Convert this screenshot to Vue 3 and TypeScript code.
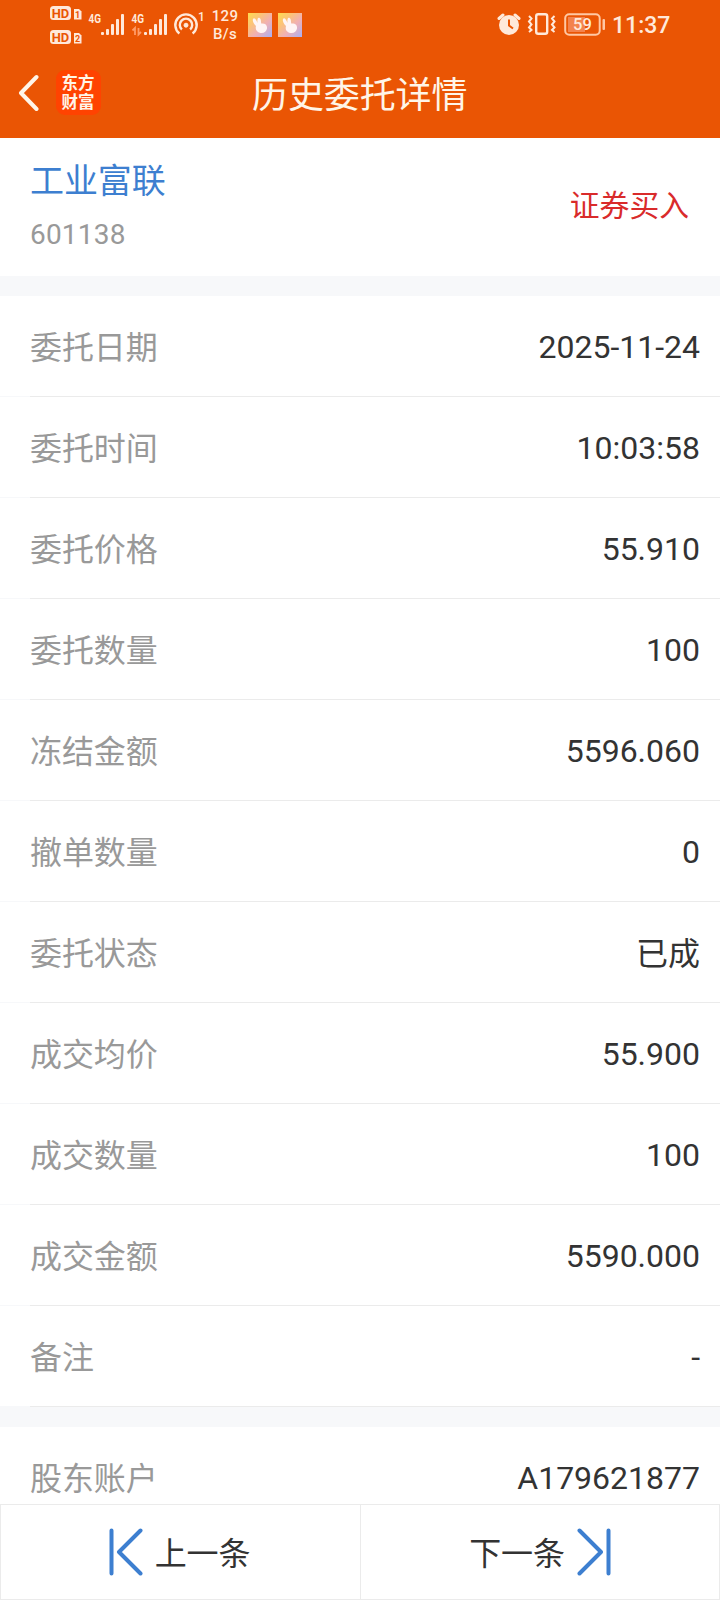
<script setup lang="ts">
interface Row {
  label: string
  value: string
}

const orderRows: Row[] = [
  { label: '委托日期', value: '2025-11-24' },
  { label: '委托时间', value: '10:03:58' },
  { label: '委托价格', value: '55.910' },
  { label: '委托数量', value: '100' },
  { label: '冻结金额', value: '5596.060' },
  { label: '撤单数量', value: '0' },
  { label: '委托状态', value: '已成' },
  { label: '成交均价', value: '55.900' },
  { label: '成交数量', value: '100' },
  { label: '成交金额', value: '5590.000' },
  { label: '备注', value: '-' },
]

const accountRows: Row[] = [{ label: '股东账户', value: 'A179621877' }]
const signalBars = [3, 6, 11, 16, 21]
</script>

<template>
  <div class="screen">
    <header class="top">
      <div class="status">
        <svg class="hd" width="36" height="50" viewBox="0 0 36 50">
          <g v-for="n in 2" :key="n" :transform="`translate(0 ${(n - 1) * 24})`">
            <rect x="0" y="6" width="21" height="14" rx="3.5" fill="#ffe9da" />
            <text x="10.5" y="17.800" text-anchor="middle" class="hd-text" textLength="17.5" lengthAdjust="spacingAndGlyphs">HD</text>
            <path d="M24 9h5l2.500 2.500V19.500h-7.500z" fill="#ffe9da" />
            <text x="27.700" y="18" text-anchor="middle" class="hd-num">{{ n }}</text>
          </g>
        </svg>
        <svg v-for="n in 2" :key="n" class="signal" width="43" height="50" viewBox="0 0 43 50">
          <text x="2.500" y="22.500" class="net" textLength="12.5" lengthAdjust="spacingAndGlyphs">4G</text>
          <rect
            v-for="(h, i) in signalBars"
            :key="h"
            :x="15 + i * 5"
            :y="35 - h"
            width="3"
            :height="h"
            rx="1"
            fill="#ffe9da"
          />
          <path v-if="n === 2" d="M6 35V28L3.500 30.500M9.500 28v6.500L12 32" fill="none" stroke="#ff9c69" stroke-width="1.800" />
        </svg>
        <svg class="hotspot" width="32" height="50" viewBox="0 0 32 50" fill="none" stroke="#ffe9da">
          <path d="M7.400 33.500A10.700 10.700 0 1 1 20.600 33.500" stroke-width="2.400" />
          <path d="M9.900 29.500A6.200 6.200 0 1 1 18.100 29.500" stroke-width="2.400" />
          <circle cx="14" cy="25.200" r="2" fill="#ffe9da" stroke-width="1" />
          <text x="26" y="20.500" class="tiny">1</text>
        </svg>
        <div class="speed"><span>129</span><span>B/s</span></div>
        <svg v-for="n in 2" :key="'app' + n" class="app" width="24" height="24" viewBox="0 0 24 24">
          <defs>
            <linearGradient :id="'glow' + n" x1="0" y1="0" x2="1" y2="1">
              <stop offset="0" stop-color="#ffdc4e" />
              <stop offset=".3" stop-color="#fcc477" />
              <stop offset=".6" stop-color="#f0b0b4" />
              <stop offset="1" stop-color="#a9b0f4" />
            </linearGradient>
          </defs>
          <rect width="24" height="24" :fill="`url(#glow${n})`" />
          <path
            d="M5 6c1-2 3-.5 4.500 4C9 6 10 4 11.500 5c1.500.8 1.500 3 1.700 5.500C17 10 19.500 12 19 15.500c-.5 3-3 5-6.500 4.500-4-.5-5.500-4-4.500-7C5.500 10.500 4.300 8 5 6z"
            fill="#fff5f5"
          />
        </svg>
        <svg class="alarm" width="24" height="50" viewBox="0 0 24 50">
          <circle cx="12" cy="25" r="10" fill="#ffe9da" />
          <path d="M2 18.500l4-3.500M22 18.500l-4-3.500" stroke="#ffe9da" stroke-width="3" stroke-linecap="round" />
          <path d="M12 19.500V25.500l4 3" fill="none" stroke="#ea5504" stroke-width="2" />
        </svg>
        <svg class="vibrate" width="30" height="50" viewBox="0 0 30 50" fill="none" stroke="#ffe9da">
          <rect x="9.200" y="14.200" width="11" height="19.500" rx="2" stroke-width="2.400" />
          <path
            d="M2 16l2.500 2.500L2 21.500l2.500 3L2 27.500l2.500 2.500L2 32M27.500 16l-2.500 2.500 2.500 3-2.500 3 2.500 3-2.500 2.500 2.500 2"
            stroke-width="2"
          />
        </svg>
        <svg class="battery" width="42" height="50" viewBox="0 0 42 50">
          <rect x="4" y="17" width="17" height="15" fill="#f3834e" />
          <rect x="1.200" y="14.200" width="34.500" height="20.500" rx="4" fill="none" stroke="#ffc8a4" stroke-width="2" />
          <rect x="38.500" y="19" width="2.500" height="11" rx="1" fill="#ffc8a4" />
          <text x="18.500" y="30.300" text-anchor="middle" class="charge">59</text>
        </svg>
        <span class="clock">11:37</span>
      </div>
      <div class="nav">
        <svg class="back" width="22" height="38" viewBox="0 0 22 38">
          <path d="M19.500 3L4 19l15.500 16" fill="none" stroke="#fff5e8" stroke-width="4" stroke-linecap="round" stroke-linejoin="round" />
        </svg>
        <div class="logo"><span>东方</span><span>财富</span></div>
        <h1 class="title">历史委托详情</h1>
      </div>
    </header>

    <section class="stock">
      <div>
        <div class="name">工业富联</div>
        <div class="code">601138</div>
      </div>
      <div class="side">证券买入</div>
    </section>

    <section class="group">
      <div v-for="row in orderRows" :key="row.label" class="row">
        <span class="label">{{ row.label }}</span>
        <span class="value" :class="{ han: row.value === '已成' }">{{ row.value }}</span>
      </div>
    </section>
    <section class="group account">
      <div v-for="row in accountRows" :key="row.label" class="row">
        <span class="label">{{ row.label }}</span>
        <span class="value">{{ row.value }}</span>
      </div>
    </section>

    <footer class="pager">
      <button class="page prev">
        <svg width="34" height="48" viewBox="0 0 34 48">
          <path d="M2.500 2.500v43M31.500 2.500L10 24l21.500 21.500" class="arrow" />
        </svg>
        <span class="page-text">上一条</span>
      </button>
      <button class="page next">
        <span class="page-text">下一条</span>
        <svg width="34" height="48" viewBox="0 0 34 48">
          <path d="M31.500 2.500v43M2.500 2.500L24 24L2.500 45.500" class="arrow" />
        </svg>
      </button>
    </footer>
  </div>
</template>

<style>
body {
  margin: 0;
  overflow: hidden;
}
</style>

<style scoped>
.screen {
  width: 720px;
  height: 1600px;
  box-sizing: border-box;
  display: flex;
  flex-direction: column;
  overflow: hidden;
  background: #f7f8fa;
  color: #333;
  font-family: Roboto, 'Noto Sans CJK SC', sans-serif;
}
.top {
  flex: none;
  height: 138px;
  background: #ea5504;
  color: #fff5e8;
}
.status {
  display: flex;
  align-items: center;
  height: 50px;
  padding-left: 50px;
  color: #ffe9da;
}
.status > * {
  flex: none;
}
.hd-text {
  font: 700 13.5px Roboto, sans-serif;
  fill: #ea5504;
}
.hd-num {
  font: 700 9px Roboto, sans-serif;
  fill: #ea5504;
}
.net {
  font: 700 13.5px Roboto, sans-serif;
  fill: #ffe9da;
}
.tiny {
  font: 500 12px Roboto, sans-serif;
  fill: #ffe9da;
  stroke: none;
}
.speed {
  display: flex;
  flex-direction: column;
  align-items: center;
  width: 28px;
  margin-left: 7px;
  font-size: 15px;
  font-weight: 500;
  line-height: 18px;
  letter-spacing: 0.3px;
}
.app {
  margin-left: 6px;
}
.speed + .app {
  margin-left: 9px;
}
.alarm {
  margin-left: 195px;
}
.vibrate {
  margin-left: 6px;
}
.battery {
  margin-left: 7px;
}
.charge {
  font: 500 16.5px Roboto, sans-serif;
  fill: #ffe9da;
}
.clock {
  margin-left: 6px;
  padding-top: 1px;
  font-size: 23px;
  font-weight: 500;
}
.nav {
  display: flex;
  align-items: center;
  height: 88px;
  padding-left: 17px;
}
.back {
  margin-top: -2px;
}
.logo {
  display: flex;
  flex-direction: column;
  align-items: center;
  justify-content: center;
  width: 45px;
  height: 45px;
  box-sizing: border-box;
  margin: -3px 0 0 17px;
  padding-right: 1px;
  border-radius: 9px;
  background: #ff4301;
  font-size: 16.5px;
  font-weight: 700;
  line-height: 19px;
}
.title {
  margin: 4px 0 0 151px;
  font-size: 36px;
  font-weight: 400;
  line-height: 52px;
  letter-spacing: -0.1px;
}
.stock {
  flex: none;
  display: flex;
  justify-content: space-between;
  align-items: center;
  height: 138px;
  box-sizing: border-box;
  padding: 0 31px 4px 30px;
  margin-bottom: 20px;
  background: #fff;
}
.name {
  color: #3d7fd0;
  font-size: 34px;
  line-height: 50px;
  letter-spacing: -0.1px;
}
.code {
  margin-top: 9px;
  color: #999;
  font-size: 28px;
  line-height: 40px;
  letter-spacing: 0.2px;
}
.side {
  padding-top: 2px;
  color: #d92b2b;
  font-size: 29.8px;
  line-height: 44px;
}
.group {
  flex: none;
  background: #fff;
}
.account {
  flex: 1 1 0;
  min-height: 0;
  margin-top: 20px;
  overflow: hidden;
}
.row {
  display: flex;
  justify-content: space-between;
  align-items: center;
  height: 101px;
  box-sizing: border-box;
  padding: 0 20px 1px 30px;
  background: linear-gradient(to right, #f7f8fa 30px, #ebebeb 30px) bottom / 100% 1px no-repeat;
  font-size: 32px;
  line-height: 46px;
}
.label {
  padding-top: 3px;
  color: #999;
  letter-spacing: -0.1px;
}
.value {
  padding-top: 1px;
}
.value.han {
  padding-top: 3px;
}
.pager {
  flex: none;
  display: flex;
  height: 96px;
  box-sizing: border-box;
  border: 1px solid #ebebeb;
  background: #fff;
}
.page {
  width: 359px;
  box-sizing: border-box;
  display: flex;
  align-items: center;
  justify-content: center;
  gap: 12px;
  padding: 0 0 1px;
  border: 0;
  background: none;
  color: #333;
  font: inherit;
  font-size: 32px;
}
.page-text {
  padding-bottom: 1px;
  letter-spacing: -0.1px;
}
.prev {
  width: 360px;
  padding-right: 2px;
  border-right: 1px solid #ebebeb;
}
.next {
  width: 358px;
}
.arrow {
  fill: none;
  stroke: #3d7fd0;
  stroke-width: 4;
  stroke-linecap: round;
  stroke-linejoin: round;
}
</style>
